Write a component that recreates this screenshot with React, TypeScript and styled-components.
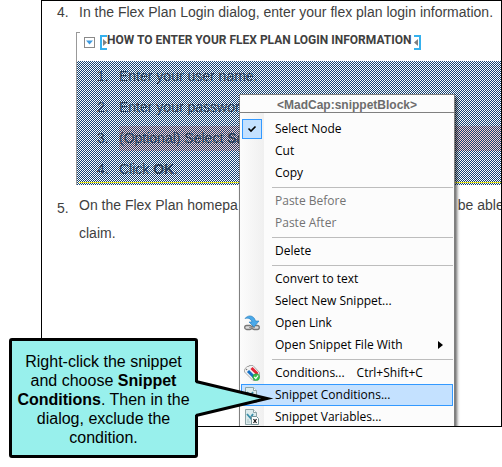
import React from "react";
import styled, { createGlobalStyle, css } from "styled-components";

const GlobalStyle = createGlobalStyle`
  * { box-sizing: border-box; }
  body { margin: 0; background: #fff; font-family: "Liberation Sans", Arial, sans-serif; }
`;

const Page = styled.main`
  position: relative;
  display: flow-root;
  overflow: hidden;
  padding-bottom: 40px;
`;

const Editor = styled.section`
  position: relative;
  margin-left: 41px;
  height: 427px;
  border: 1px solid #000;
  overflow: hidden;
  color: #3f3f3f;
  font-size: 14px;
  line-height: 28px;
`;

const Steps = styled.ol`
  margin: 0;
  padding: 0;
  list-style: none;
`;

const Step = styled.li<{ $compact?: boolean }>`
  display: grid;
  grid-template-columns: 37px 1fr;
  line-height: ${(p) => (p.$compact ? 22 : 28)}px;
  white-space: nowrap;
`;

const Num = styled.span<{ $low?: boolean }>`
  padding-left: 15px;
  padding-top: ${(p) => (p.$low ? 3 : 0)}px;
`;

const Text = styled.p`
  margin: 0;
`;

const Tail = styled.span`
  display: inline-block;
  padding-left: 220px;
`;

const Snippet = styled.div`
  margin: 9px 0 6px 34px;
  border-left: 1px solid #999;
`;

const SnippetHead = styled.header`
  display: flex;
  align-items: flex-start;
  height: 29px;
  &::before {
    content: "";
    width: 3px;
    border-top: 1px solid #999;
  }
`;

const Expander = styled.button`
  display: flex;
  align-items: center;
  justify-content: center;
  width: 11px;
  height: 11px;
  margin: 5px 5px 0 4px;
  padding: 0;
  border: 1px solid #8a8a8a;
  background: #fff;
`;

const Title = styled.h2`
  margin: 0 3px 0 0;
  font: bold 12px/16px Roboto, sans-serif;
  white-space: nowrap;
`;

const TagMark = styled.svg`
  flex: none;
  margin-top: 3px;
`;

const Excluded = styled.div`
  position: relative;
  height: 124px;
  &::after {
    content: "";
    position: absolute;
    inset: 0;
    background: repeating-conic-gradient(#144273 0 25%, transparent 0 50%) 0 0 / 2px 2px;
  }
`;

const SubStep = styled.li`
  display: grid;
  grid-template-columns: 42px 1fr;
  align-items: center;
  height: 31px;
  line-height: 25px;
  white-space: nowrap;
`;

const SubNum = styled.span`
  padding-left: 20px;
`;

const SubText = styled.p<{ $tagged?: boolean }>`
  margin: 0;
  background: ${(p) => (p.$tagged ? "#ffcfca" : "none")};
`;

const SnippetEnd = styled.hr`
  position: absolute;
  inset: auto 0 2px 2px;
  margin: 0;
  border: 0;
  border-top: 1px solid #e6e61e;
  z-index: 1;
`;

const Menu = styled.div`
  position: absolute;
  z-index: 2;
  top: 93px;
  left: 197px;
  width: 216px;
  border: 1px solid #808080;
  background: linear-gradient(90deg, #fcfcfc 0, #f0f0f0 24px, #fcfcfc 24px);
  box-shadow: 2px 3px 3px rgba(0, 0, 0, 0.6);
  color: #000;
`;

const MenuTitle = styled.div`
  height: 18px;
  padding-top: 2px;
  border-bottom: 1px solid #808080;
  background: #fcfcfc;
  color: #6d6d6d;
  font: bold 12px/17px "Liberation Sans", Arial, sans-serif;
  text-align: center;
`;

const MenuBody = styled.div`
  padding: 5px 1px 0;
`;

const Item = styled.button<{ $active?: boolean }>`
  display: flex;
  align-items: center;
  width: 100%;
  height: 22px;
  padding: 0;
  border: 1px solid transparent;
  background: none;
  color: #000;
  font: 12px/20px "Open Sans", "Noto Sans", sans-serif;
  text-align: left;
  white-space: pre;
  &:disabled { color: #737373; }
  ${(p) =>
    p.$active &&
    css`
      border-color: #3399ff;
      background: #c4e1ff;
    `}
`;

const IconCell = styled.span<{ $checked?: boolean }>`
  flex: none;
  display: flex;
  align-items: center;
  justify-content: center;
  width: 20px;
  height: 20px;
  margin-right: 13px;
  background: ${(p) => (p.$checked ? "#c4e1ff" : "none")};
  outline: ${(p) => (p.$checked ? "1px solid #3399ff" : "none")};
  outline-offset: -1px;
`;

const Shortcut = styled.span`
  margin-left: 12px;
`;

const Arrow = styled.svg`
  margin-left: auto;
  margin-right: 9px;
`;

const Divider = styled.hr`
  margin: 3px 0 2px 31px;
  border: 0;
  border-top: 1px solid #bdbdbd;
`;

const Callout = styled.aside`
  position: absolute;
  z-index: 3;
  top: 338px;
  left: 9px;
  width: 189px;
  height: 120px;
  padding: 11px 4px 0;
  border: 3px solid #000;
  border-radius: 3px;
  background: #98f0ec;
  color: #000;
  font-size: 16px;
  line-height: 19px;
  text-align: center;
`;

const Pointer = styled.svg`
  position: absolute;
  top: 38px;
  left: 183px;
`;

const LinkIcon = () => (
  <svg width="16" height="16" viewBox="0 0 16 16" fill="none">
    <rect x="0.7" y="10.5" width="7" height="4" rx="2" stroke="#777" strokeWidth="1.3" fill="#ddd" />
    <rect x="8.3" y="10.5" width="7" height="4" rx="2" stroke="#777" strokeWidth="1.3" fill="#ddd" />
    <path d="M5 12.5h6" stroke="#999" strokeWidth="1.3" />
    <path d="M1 3.500C4 -.5 10 0 11.500 6H15l-5 6-5-5h3C7 3.500 4 2.500 1 3.500Z" fill="#4aa9ea" stroke="#2178b8" strokeWidth="0.6" />
  </svg>
);

const ConditionsIcon = () => (
  <svg width="16" height="16" viewBox="0 0 16 16">
    <path d="M.5 4.500 3 1.500h2V.5h4l6.500 7v4L11 15.500H9L.5 7Z" fill="#f3f3f3" stroke="#999" strokeWidth="0.8" />
    <path d="m4 6 6 6" stroke="#1670c4" strokeWidth="3" />
    <path d="m7.500 3 6 6" stroke="#e42335" strokeWidth="3" />
    <circle cx="2.500" cy="4.500" r="0.8" fill="#777" />
    <circle cx="12.200" cy="12.200" r="3.400" fill="#3bbf4b" stroke="#25913a" strokeWidth="0.5" />
    <path d="m10.300 12 1.500 1.500 2.300-3" fill="none" stroke="#fff" strokeWidth="1.200" />
  </svg>
);

const SnippetIcon = ({ variable }: { variable?: boolean }) => (
  <svg width="16" height="16" viewBox="0 0 16 16">
    <path d="M1.500.5h8l3 3v12h-11Z" fill="#dcebed" stroke="#8da5a8" />
    <path d="M9.500.5v3h3" fill="#fff" stroke="#8da5a8" />
    <path d="m3 5 6 7M9 5 7 8" stroke="#378da8" strokeWidth="1.800" />
    <path d="M3 13h3M3 11h2" stroke="#a7c1c4" />
    {variable && (
      <>
        <path d="M7.500 7.500h5l2 2v6h-7Z" fill="#fff" stroke="#78969a" />
        <path d="m9.500 10 3 4m0-4-3 4" stroke="#111" strokeWidth="1.200" />
      </>
    )}
  </svg>
);

const CheckIcon = () => (
  <svg width="10" height="8" viewBox="0 0 10 8">
    <path d="m1.500 3.500 2.500 2.500 4.500-4.500" fill="none" stroke="#000" strokeWidth="1.600" />
  </svg>
);

type EntryProps = {
  label: string;
  icon?: React.ReactNode;
  checked?: boolean;
  active?: boolean;
  disabled?: boolean;
  shortcut?: string;
  submenu?: boolean;
};

const Entry = ({ label, icon, checked, active, disabled, shortcut, submenu }: EntryProps) => (
  <Item type="button" role="menuitem" $active={active} disabled={disabled}>
    <IconCell $checked={checked}>{checked ? <CheckIcon /> : icon}</IconCell>
    {label}
    {shortcut && <Shortcut>{shortcut}</Shortcut>}
    {submenu && (
      <Arrow width="5" height="8" viewBox="0 0 5 8">
        <path d="M0 0v8l5-4Z" />
      </Arrow>
    )}
  </Item>
);

export default function App() {
  return (
    <>
      <GlobalStyle />
      <Page>
        <Editor>
          <Steps>
            <Step $compact>
              <Num>4.</Num>
              <Text>In the Flex Plan Login dialog, enter your flex plan login information.</Text>
            </Step>
          </Steps>
          <Snippet>
            <SnippetHead>
              <Expander type="button" aria-label="Collapse snippet">
                <svg width="7" height="5" viewBox="0 0 7 5">
                  <path d="M0 .5h7L3.500 4.500Z" fill="#3f9be0" />
                </svg>
              </Expander>
              <TagMark width="7" height="15" viewBox="0 0 7 15">
                <path d="M7 1H1v13h6" fill="none" stroke="#35b1ee" strokeWidth="2" />
                <path d="M3 4v7l4-3.500Z" fill="#808080" />
              </TagMark>
              <Title>HOW TO ENTER YOUR FLEX PLAN LOGIN INFORMATION</Title>
              <TagMark width="7" height="15" viewBox="0 0 7 15">
                <path d="M0 1h6v13H0" fill="none" stroke="#35b1ee" strokeWidth="2" />
                <path d="M4 4v7L0 7.500Z" fill="#808080" />
              </TagMark>
            </SnippetHead>
            <Excluded>
              <Steps>
                <SubStep>
                  <SubNum>1.</SubNum>
                  <SubText>Enter your user name.</SubText>
                </SubStep>
                <SubStep>
                  <SubNum>2.</SubNum>
                  <SubText>Enter your password.</SubText>
                </SubStep>
                <SubStep>
                  <SubNum>3.</SubNum>
                  <SubText $tagged>(Optional) Select <b>Save</b></SubText>
                </SubStep>
                <SubStep>
                  <SubNum>4.</SubNum>
                  <SubText>Click <b>OK</b>.</SubText>
                </SubStep>
              </Steps>
              <SnippetEnd />
            </Excluded>
          </Snippet>
          <Steps>
            <Step>
              <Num $low>5.</Num>
              <Text>
                On the Flex Plan homepa<Tail>be able</Tail>
                <br />
                claim.
              </Text>
            </Step>
          </Steps>
          <Menu role="menu" aria-label="Snippet block">
            <MenuTitle>&lt;MadCap:snippetBlock&gt;</MenuTitle>
            <MenuBody>
              <Entry label="Select Node" checked />
              <Entry label="Cut" />
              <Entry label="Copy" />
              <Divider />
              <Entry label="Paste Before" disabled />
              <Entry label="Paste After" disabled />
              <Divider />
              <Entry label="Delete" />
              <Divider />
              <Entry label="Convert to text" />
              <Entry label="Select New Snippet..." />
              <Entry label="Open Link" icon={<LinkIcon />} />
              <Entry label="Open Snippet File With" submenu />
              <Divider />
              <Entry label="Conditions..." icon={<ConditionsIcon />} shortcut="Ctrl+Shift+C" />
              <Entry label="Snippet Conditions..." icon={<SnippetIcon />} active />
              <Entry label="Snippet Variables..." icon={<SnippetIcon variable />} />
            </MenuBody>
          </Menu>
        </Editor>
        <Callout>
          Right-click the snippet and choose <b>Snippet Conditions</b>. Then in the dialog, exclude the condition.
          <Pointer width="80" height="39" viewBox="0 0 80 39">
            <path d="M0 3 76 19.500 0 36Z" fill="#98f0ec" />
            <path d="M1 2.500 72 19.500 1 36.500" fill="none" stroke="#000" strokeWidth="3" strokeMiterlimit="10" />
          </Pointer>
        </Callout>
      </Page>
    </>
  );
}
